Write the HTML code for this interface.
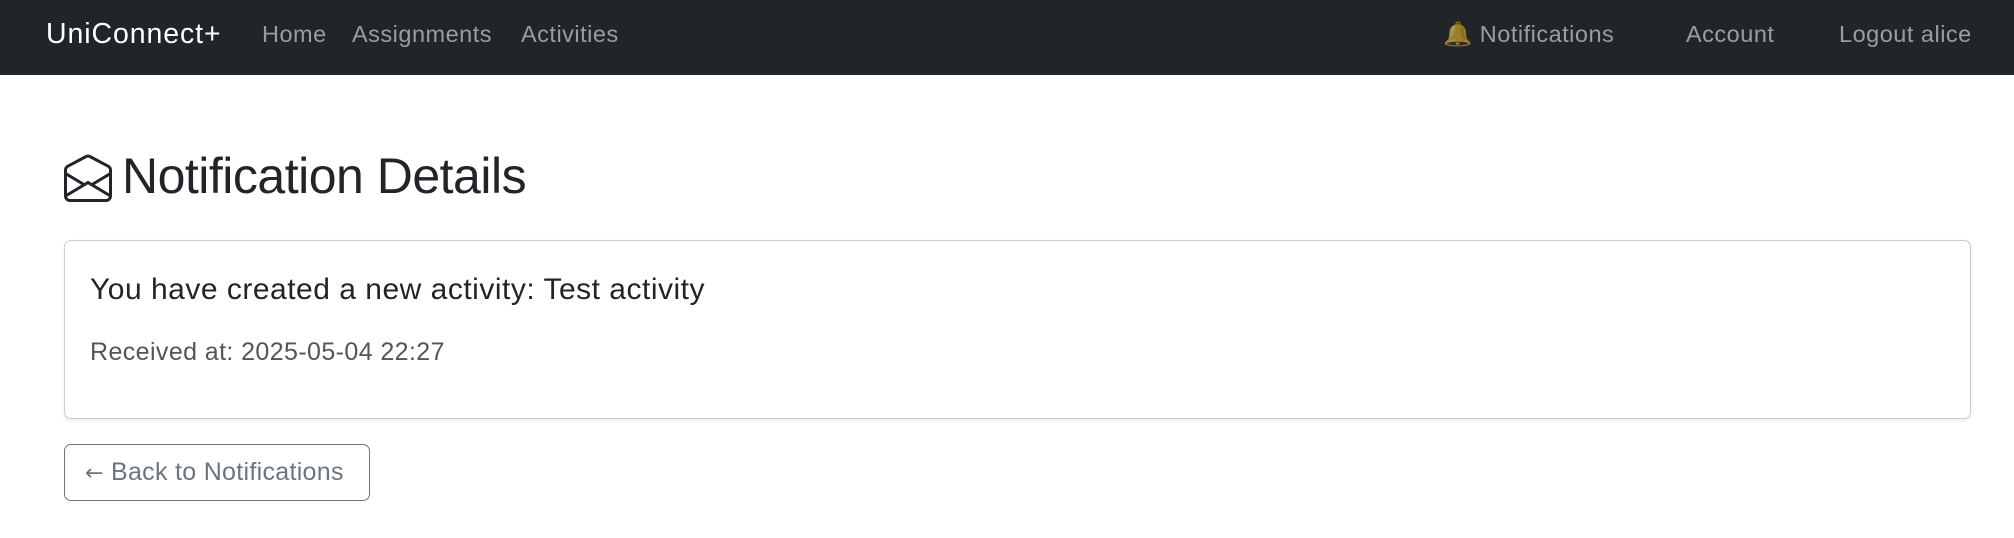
<!DOCTYPE html>
<html><head><meta charset="utf-8"><style>
*{box-sizing:border-box;margin:0;padding:0}
body{width:2014px;height:538px;background:#fff;font-family:"Liberation Sans",sans-serif;color:#212529;overflow:hidden;position:relative}
.nav{position:absolute;left:0;top:0;width:2014px;height:75px;background:#212529}
.nav span{position:absolute;top:0;line-height:68px;font-size:23.5px;letter-spacing:0.5px;color:rgba(255,255,255,.55)}
.brand{color:#fff!important;font-size:28.5px!important;letter-spacing:0.9px!important}
h1{position:absolute;left:122px;top:146px;font-size:50px;font-weight:500;line-height:60px;letter-spacing:-0.5px}
.card{position:absolute;left:64px;top:240px;width:1907px;height:179px;border:1.5px solid #ccc;border-radius:7px;box-shadow:0 2px 4px rgba(0,0,0,.08)}
.t1{position:absolute;left:90px;top:272px;font-size:30px;line-height:36px;letter-spacing:0.5px}
.t2{position:absolute;left:90px;top:337px;font-size:25px;line-height:30px;color:#555;letter-spacing:0.4px}
.btn{position:absolute;left:64px;top:444px;width:306px;height:57px;border:1.5px solid #6c757d;border-radius:7px;color:#6c757d;font-size:25px;line-height:54px;padding-left:20px;letter-spacing:0.3px}
.ar{font-family:"DejaVu Sans",sans-serif;font-size:22px}
</style></head><body>
<div class="nav">
<span class="brand" style="left:46px">UniConnect+</span>
<span style="left:262px">Home</span>
<span style="left:352px">Assignments</span>
<span style="left:521px">Activities</span>
<span style="left:1443px">🔔 Notifications</span>
<span style="left:1686px">Account</span>
<span style="left:1839px">Logout alice</span>
</div>
<svg style="position:absolute;left:64px;top:154px" width="48" height="48" viewBox="0 0 16 16" fill="#212529"><path d="M8.47 1.318a1 1 0 0 0-.94 0l-6 3.2A1 1 0 0 0 1 5.4v.817l5.75 3.45L8 8.917l1.25.75L15 6.217V5.4a1 1 0 0 0-.53-.882zM15 7.383l-4.778 2.867L15 13.117zm-.035 6.880L8 10.082l-6.965 4.18A1 1 0 0 0 2 15h12a1 1 0 0 0 .965-.738ZM1 13.116l4.778-2.867L1 7.383v5.734ZM7.059.435a2 2 0 0 1 1.882 0l6 3.2A2 2 0 0 1 16 5.4V14a2 2 0 0 1-2 2H2a2 2 0 0 1-2-2V5.4a2 2 0 0 1 1.059-1.765z"/></svg>
<h1>Notification Details</h1>
<div class="card"></div>
<div class="t1">You have created a new activity: Test activity</div>
<div class="t2">Received at: 2025-05-04 22:27</div>
<div class="btn"><span class="ar">←</span> Back to Notifications</div>
</body></html>
